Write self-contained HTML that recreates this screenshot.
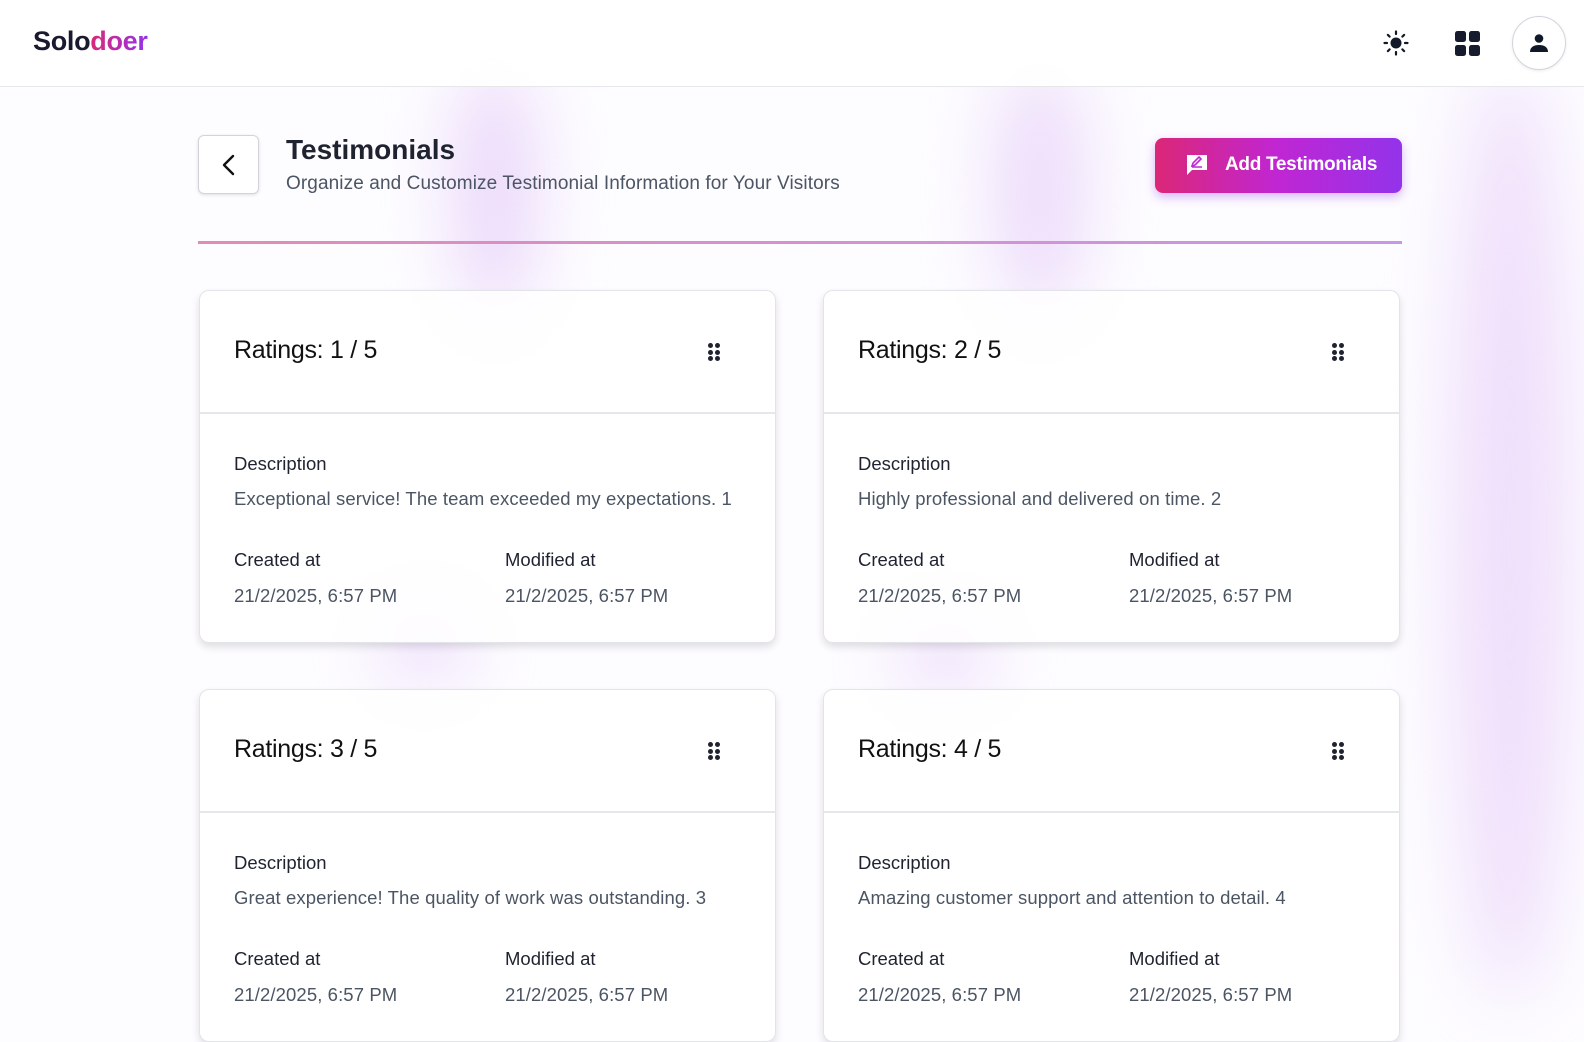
<!DOCTYPE html>
<html><head><meta charset="utf-8"><style>
*{box-sizing:border-box;margin:0;padding:0}
body{width:1584px;height:1000px;overflow:hidden;background:#fdfcff;font-family:"Liberation Sans",sans-serif;position:relative;color:#111827}
.streak{position:absolute;filter:blur(34px);border-radius:50%;}
nav{position:absolute;left:0;top:0;width:1584px;height:87px;background:rgba(255,255,255,0.93);border-bottom:1px solid #e5e7eb;z-index:3}
.logo{position:absolute;left:33px;top:26px;font-size:27px;font-weight:bold;letter-spacing:-0.3px;color:#1a1a2e}
.logo span{background:linear-gradient(90deg,#db2777,#9333ea);-webkit-background-clip:text;background-clip:text;color:transparent}
.av{position:absolute;left:1512px;top:16px;width:54px;height:54px;border-radius:50%;border:1.5px solid #d1d5db;background:#fff;box-shadow:0 1px 3px rgba(0,0,0,.08)}
.back{position:absolute;left:198px;top:135px;width:61px;height:59px;border:1.5px solid #d1d5db;border-radius:6px;background:#fff;box-shadow:0 1px 3px rgba(0,0,0,.12)}
h1{position:absolute;left:286px;top:134px;font-size:28px;font-weight:bold;color:#1f2330}
.sub{position:absolute;left:286px;top:173px;font-size:19px;color:#4b5563;letter-spacing:0.1px}
.btn{position:absolute;left:1155px;top:138px;width:247px;height:55px;border-radius:8px;background:linear-gradient(90deg,#db2777,#c026d3 50%,#9333ea);box-shadow:0 4px 10px rgba(147,51,234,.35);color:#fff;font-weight:bold;font-size:19px}
.btn span{position:absolute;left:70px;top:16px;letter-spacing:-0.3px}
.line{position:absolute;left:198px;top:241px;width:1204px;height:3px;background:linear-gradient(90deg,#e28bb8,#c897e6);}
.card{position:absolute;width:577px;height:353px;border:1.5px solid #e3e4ea;border-radius:10px;background:rgba(255,255,255,0.82);box-shadow:0 4px 8px rgba(0,0,0,.12);overflow:hidden;z-index:2}
.card .hd{height:123px;border-bottom:2px solid #e5e7eb;position:relative}
.card .t{position:absolute;left:34px;top:45px;font-size:25px;color:#111;letter-spacing:-0.3px}
.dots{position:absolute;left:508px;top:52px;width:12px;height:18px}
.dots i{position:absolute;width:5px;height:5px;border-radius:50%;background:#1f2330}
.card .lb{position:absolute;left:34px;font-size:18.5px;color:#1f2330}
.card .v{position:absolute;left:34px;font-size:18.5px;color:#4b5563;letter-spacing:0.1px}
</style></head><body>
<div class="streak" style="left:455px;top:60px;width:80px;height:260px;background:#ead7fa"></div>
<div class="streak" style="left:995px;top:60px;width:90px;height:260px;background:#ecdbfa"></div>
<div class="streak" style="left:1450px;top:60px;width:120px;height:940px;background:#efdffb"></div>
<div class="streak" style="left:380px;top:610px;width:90px;height:70px;background:#ecdbfa"></div>
<div class="streak" style="left:900px;top:620px;width:90px;height:70px;background:#ecdbfa"></div>
<nav>
<div class="logo">Solo<span>doer</span></div>
<svg style="position:absolute;left:1383px;top:30px" width="26" height="26" viewBox="0 0 26 26"><circle cx="13" cy="13" r="5.5" fill="#111827"/><g stroke="#111827" stroke-width="2.2" stroke-linecap="round"><path d="M13 1.5v2.5M13 22v2.5M1.5 13h2.5M22 13h2.5M4.9 4.9l1.7 1.7M19.4 19.4l1.7 1.7M4.9 21.1l1.7-1.7M19.4 6.6l1.7-1.7"/></g></svg>
<svg style="position:absolute;left:1455px;top:31px" width="25" height="25" viewBox="0 0 25 25" fill="#161b2e"><rect x="0" y="0" width="11" height="11" rx="2.5"/><rect x="14" y="0" width="11" height="11" rx="2.5"/><rect x="0" y="14" width="11" height="11" rx="2.5"/><rect x="14" y="14" width="11" height="11" rx="2.5"/></svg>
<div class="av"><svg style="position:absolute;left:16px;top:16px" width="20" height="20" viewBox="0 0 20 20" fill="#111827"><circle cx="10" cy="5.5" r="4.3"/><path d="M1 19c0-5 4-7 9-7s9 2 9 7z"/></svg></div>
</nav>
<div class="back"><svg style="position:absolute;left:20px;top:17px" width="20" height="24" viewBox="0 0 20 24"><path d="M14 3L5 12l9 9" fill="none" stroke="#111" stroke-width="2.4" stroke-linecap="round" stroke-linejoin="round"/></svg></div>
<h1>Testimonials</h1>
<div class="sub">Organize and Customize Testimonial Information for Your Visitors</div>
<div class="btn"><svg style="position:absolute;left:30px;top:15px" width="24" height="24" viewBox="0 0 24 24"><path d="M2 2h20v15H7l-5 5z" fill="#fff"/><path d="M7 13l1-3 6-6 2 2-6 6z M7 14h10" stroke="#c026d3" stroke-width="1.6" fill="none"/></svg><span>Add Testimonials</span></div>
<div class="line"></div>

<div class="card" style="left:199px;top:290px"><div class="hd"><div class="t">Ratings: 1 / 5</div><div class="dots"><i style="left:0;top:0"></i><i style="left:7px;top:0"></i><i style="left:0;top:6.5px"></i><i style="left:7px;top:6.5px"></i><i style="left:0;top:13px"></i><i style="left:7px;top:13px"></i></div></div>
<div class="lb" style="top:162px">Description</div><div class="v" style="top:197px">Exceptional service! The team exceeded my expectations. 1</div>
<div class="lb" style="top:258px">Created at</div><div class="lb" style="top:258px;left:305px">Modified at</div>
<div class="v" style="top:294px">21/2/2025, 6:57 PM</div><div class="v" style="top:294px;left:305px">21/2/2025, 6:57 PM</div></div>

<div class="card" style="left:823px;top:290px"><div class="hd"><div class="t">Ratings: 2 / 5</div><div class="dots"><i style="left:0;top:0"></i><i style="left:7px;top:0"></i><i style="left:0;top:6.5px"></i><i style="left:7px;top:6.5px"></i><i style="left:0;top:13px"></i><i style="left:7px;top:13px"></i></div></div>
<div class="lb" style="top:162px">Description</div><div class="v" style="top:197px">Highly professional and delivered on time. 2</div>
<div class="lb" style="top:258px">Created at</div><div class="lb" style="top:258px;left:305px">Modified at</div>
<div class="v" style="top:294px">21/2/2025, 6:57 PM</div><div class="v" style="top:294px;left:305px">21/2/2025, 6:57 PM</div></div>

<div class="card" style="left:199px;top:689px"><div class="hd"><div class="t">Ratings: 3 / 5</div><div class="dots"><i style="left:0;top:0"></i><i style="left:7px;top:0"></i><i style="left:0;top:6.5px"></i><i style="left:7px;top:6.5px"></i><i style="left:0;top:13px"></i><i style="left:7px;top:13px"></i></div></div>
<div class="lb" style="top:162px">Description</div><div class="v" style="top:197px">Great experience! The quality of work was outstanding. 3</div>
<div class="lb" style="top:258px">Created at</div><div class="lb" style="top:258px;left:305px">Modified at</div>
<div class="v" style="top:294px">21/2/2025, 6:57 PM</div><div class="v" style="top:294px;left:305px">21/2/2025, 6:57 PM</div></div>

<div class="card" style="left:823px;top:689px"><div class="hd"><div class="t">Ratings: 4 / 5</div><div class="dots"><i style="left:0;top:0"></i><i style="left:7px;top:0"></i><i style="left:0;top:6.5px"></i><i style="left:7px;top:6.5px"></i><i style="left:0;top:13px"></i><i style="left:7px;top:13px"></i></div></div>
<div class="lb" style="top:162px">Description</div><div class="v" style="top:197px">Amazing customer support and attention to detail. 4</div>
<div class="lb" style="top:258px">Created at</div><div class="lb" style="top:258px;left:305px">Modified at</div>
<div class="v" style="top:294px">21/2/2025, 6:57 PM</div><div class="v" style="top:294px;left:305px">21/2/2025, 6:57 PM</div></div>
</body></html>
